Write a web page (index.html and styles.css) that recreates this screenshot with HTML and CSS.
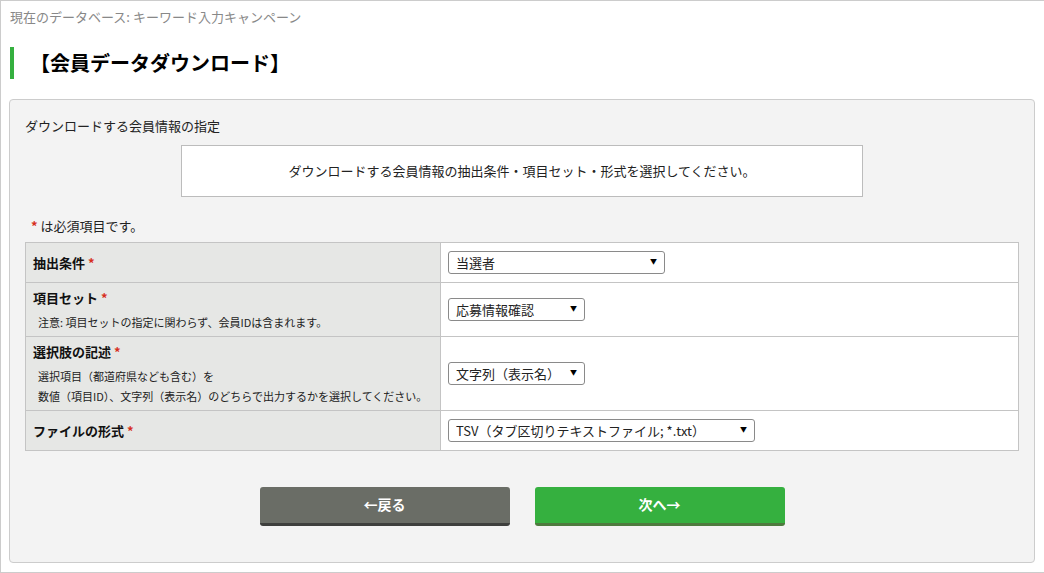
FILE: index.html
```html
<!DOCTYPE html>
<html lang="ja">
	<head>
		<meta charset="utf-8">
		<title>会員データダウンロード</title>
		<link rel="stylesheet" href="styles.css">
	</head>
	<body>
		<div class="frame">
			<p class="current-db">現在のデータベース: キーワード入力キャンペーン</p>
			<h1 class="page-title">【会員データダウンロード】</h1>
			<div class="panel">
				<p class="panel-caption">ダウンロードする会員情報の指定</p>
				<div class="notice">ダウンロードする会員情報の抽出条件・項目セット・形式を選択してください。</div>
				<p class="required-note"><span class="req">*</span> は必須項目です。</p>
				<table class="form-table">
					<tr>
						<th>抽出条件 <span class="req">*</span></th>
						<td><span class="select-wrap w-wide"><select><option>当選者</option></select></span></td>
					</tr>
					<tr>
						<th>項目セット <span class="req">*</span>
							<p class="hint">注意: 項目セットの指定に関わらず、会員IDは含まれます。</p>
						</th>
						<td><span class="select-wrap w-short"><select><option>応募情報確認</option></select></span></td>
					</tr>
					<tr>
						<th>選択肢の記述 <span class="req">*</span>
							<p class="hint">選択項目（都道府県なども含む）を<br>数値（項目ID）、文字列（表示名）のどちらで出力するかを選択してください。</p>
						</th>
						<td><span class="select-wrap w-short"><select><option>文字列（表示名）</option></select></span></td>
					</tr>
					<tr>
						<th>ファイルの形式 <span class="req">*</span></th>
						<td><span class="select-wrap w-long"><select><option>TSV（タブ区切りテキストファイル; *.txt）</option></select></span></td>
					</tr>
				</table>
				<div class="actions">
					<button class="btn btn-back">←戻る</button>
					<button class="btn btn-next">次へ→</button>
				</div>
			</div>
		</div>
	</body>
</html>
```

FILE: styles.css
```css
html, body { margin:0; padding:0; background:#fff }
body { font-family: "Noto Sans CJK JP", "Liberation Sans", sans-serif; font-size:13px; color:#222 }
.frame { border:1px solid #cccccc; border-right:none; height:571px; padding:0 0 0 8px; overflow:hidden }
.current-db { margin:0 0 0 1px; padding:7px 0 0 0; line-height:18px; color:#888; font-size:13px }
.page-title { margin:21px 0 0 1px; height:32px; border-left:4px solid #35b03f; padding-left:16px; font-size:20px; line-height:32px; font-weight:bold; color:#000 }
.panel { margin:20px 9px 0 0; background:#f3f3f3; border:1px solid #cccccc; border-radius:4px; padding:17px 15px 36px 15px }
.panel-caption { margin:0; line-height:18px; font-size:13px }
.notice { width:680px; margin:10px auto 0 auto; background:#fff; border:1px solid #bcbcbc; height:50px; line-height:50px; text-align:center; font-size:13px }
.required-note { margin:20px 0 0 6px; line-height:18px; font-size:13px }
.req { color:#d7301d; font-weight:bold }
.form-table { width:100%; margin-top:7px; border-collapse:collapse; background:#fff }
.form-table th, .form-table td { border:1px solid #c4c4c4; vertical-align:middle }
.form-table th { width:400px; background:#e6e7e5; text-align:left; padding:5px 7px 4px 7px; font-size:13px; line-height:20px; font-weight:bold; color:#111 }
.form-table td { padding:8px 7px }
.hint { margin:4px 0 0 5px; font-size:11px; line-height:20px; font-weight:normal; color:#222 }
.select-wrap { display:inline-block; position:relative; vertical-align:middle }
.select-wrap select { -webkit-appearance:none; appearance:none; width:100%; height:23px; border:1px solid #8a8a8a; border-radius:3px; background:#fff; font-family:inherit; font-size:13px; color:#222; padding:0 20px 0 7px; line-height:21px; display:block }
.select-wrap::after { content:"\25BC"; position:absolute; right:8px; top:6px; font-size:7px; line-height:9px; color:#000; pointer-events:none }
.w-wide { width:217px }
.w-short { width:137px }
.w-long { width:307px }
.actions { display:flex; justify-content:center; gap:25px; margin-top:36px }
.btn { width:250px; height:39px; border:none; border-radius:3px; font-family:inherit; font-size:14px; font-weight:bold; color:#fff; padding:0 0 3px 0 }
.btn-back { background:#6a6d66; border-bottom:3px solid #3e3f3d }
.btn-next { background:#35b03f; border-bottom:3px solid #4e7a3e }
```
